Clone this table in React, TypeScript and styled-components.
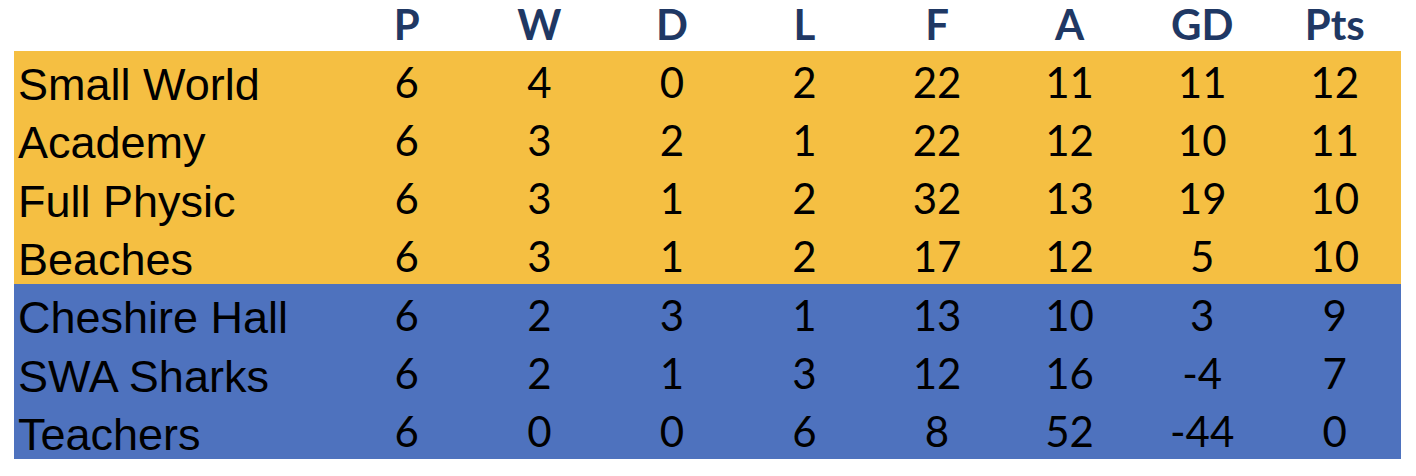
import styled, { createGlobalStyle } from 'styled-components';

const GlobalStyle = createGlobalStyle`
  html, body {
    margin: 0;
    padding: 0;
    background: #ffffff;
  }
`;

const Page = styled.div`
  padding: 0 15px 0 14px;
`;

const Table = styled.div`
  display: grid;
  grid-template-columns: 326.5px repeat(8, 1fr);
  grid-template-rows: 51px;
  grid-auto-rows: 58.33px;
  width: 1387px;
`;

const HeadCell = styled.div`
  font-family: Lato, 'Open Sans', sans-serif;
  font-weight: 700;
  font-size: 42px;
  line-height: 48px;
  color: #1f3864;
  text-align: center;
  padding-top: 0;
`;

const Row = styled.div<{ $tone: 'gold' | 'blue' }>`
  display: contents;
  & > div {
    background: ${p => (p.$tone === 'gold' ? '#f5bf42' : '#4e72be')};
  }
`;

const Name = styled.div`
  font-family: 'Liberation Sans', Arial, sans-serif;
  font-size: 45px;
  line-height: 48px;
  padding: 10px 0 0 4px;
  color: #000000;
  white-space: nowrap;
`;

const Num = styled.div`
  font-family: Lato, 'Open Sans', sans-serif;
  font-size: 42px;
  line-height: 48px;
  padding-top: 6.5px;
  text-align: center;
  color: #000000;
`;

const headers = ['P', 'W', 'D', 'L', 'F', 'A', 'GD', 'Pts'];

const teams: { name: string; stats: number[] }[] = [
  { name: 'Small World', stats: [6, 4, 0, 2, 22, 11, 11, 12] },
  { name: 'Academy', stats: [6, 3, 2, 1, 22, 12, 10, 11] },
  { name: 'Full Physic', stats: [6, 3, 1, 2, 32, 13, 19, 10] },
  { name: 'Beaches', stats: [6, 3, 1, 2, 17, 12, 5, 10] },
  { name: 'Cheshire Hall', stats: [6, 2, 3, 1, 13, 10, 3, 9] },
  { name: 'SWA Sharks', stats: [6, 2, 1, 3, 12, 16, -4, 7] },
  { name: 'Teachers', stats: [6, 0, 0, 6, 8, 52, -44, 0] },
];

export default function App() {
  return (
    <Page>
      <GlobalStyle />
      <Table>
        <div />
        {headers.map(h => (
          <HeadCell key={h}>{h}</HeadCell>
        ))}
        {teams.map((team, i) => (
          <Row key={team.name} $tone={i < 4 ? 'gold' : 'blue'}>
            <Name>{team.name}</Name>
            {team.stats.map((n, j) => (
              <Num key={j}>{n}</Num>
            ))}
          </Row>
        ))}
      </Table>
    </Page>
  );
}
